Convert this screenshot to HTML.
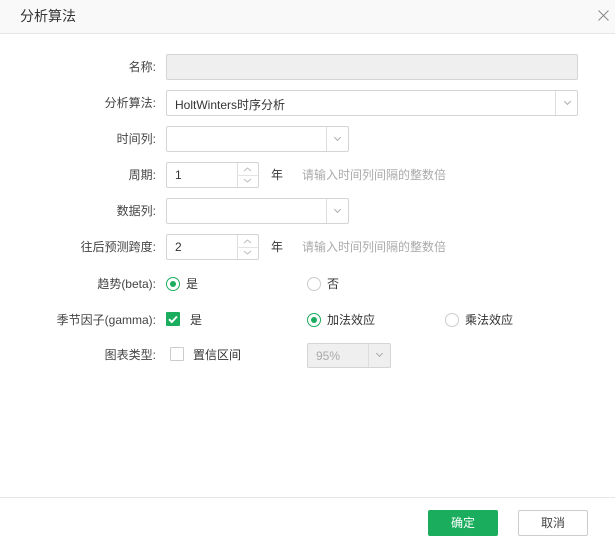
<!DOCTYPE html><html><head><meta charset="utf-8"><style>
*{box-sizing:border-box;margin:0;padding:0}
body{width:615px;height:546px;background:#fff;font-family:"Liberation Sans","Noto Sans CJK SC",sans-serif;font-size:12px;color:#333;position:relative;overflow:hidden}
.a{position:absolute}
.hd{left:0;top:0;width:615px;height:34px;background:#f9f9f9;border-bottom:1px solid #e6e6e6}
.lb{right:459px;text-align:right;white-space:nowrap;color:#444}
.in{border:1px solid #d4d4d4;background:#fff;border-radius:2px}
.dv{position:absolute;top:0;bottom:0;border-left:1px solid #ddd}
.ar{position:absolute;width:5px;height:5px;border-right:1px solid #aaa;border-bottom:1px solid #aaa;transform:rotate(45deg)}
.rd{width:14px;height:14px;border:1px solid #ccc;border-radius:50%;background:#fff}
.rd.on{border-color:#1aad5d}
.rd.on:after{content:"";position:absolute;left:3px;top:3px;width:6px;height:6px;border-radius:50%;background:#1aad5d}
.hint{color:#aaa}
</style></head><body>
<div class="a hd"></div>
<div class="a" style="left:20px;top:6px;font-size:14px;color:#333">分析算法</div>
<svg class="a" style="left:598px;top:10px" width="11" height="11"><path d="M0.5 0.5L10.5 10.5M10.5 0.5L0.5 10.5" stroke="#888" stroke-width="1"/></svg>

<div class="a lb" style="top:58px">名称:</div>
<div class="a in" style="left:166px;top:54px;width:412px;height:26px;background:#efefef"></div>

<div class="a lb" style="top:94px">分析算法:</div>
<div class="a in" style="left:166px;top:90px;width:412px;height:26px"><span style="position:absolute;left:8px;top:5px">HoltWinters时序分析</span><div class="dv" style="left:388px"></div><div class="ar" style="left:398px;top:8px"></div></div>

<div class="a lb" style="top:130px">时间列:</div>
<div class="a in" style="left:166px;top:126px;width:183px;height:26px"><div class="dv" style="left:159px"></div><div class="ar" style="left:168px;top:8px"></div></div>

<div class="a lb" style="top:166px">周期:</div>
<div class="a in" style="left:166px;top:162px;width:93px;height:26px"><span style="position:absolute;left:8px;top:5px">1</span><div class="dv" style="left:70px"></div><div style="position:absolute;left:70px;right:0;top:12px;border-top:1px solid #e4e4e4"></div><svg style="position:absolute;left:76px;top:3px" width="9" height="18"><path d="M1 5L4.5 2L8 5M1 13L4.5 16L8 13" stroke="#bbb" fill="none"/></svg></div>
<div class="a" style="left:271px;top:166px">年</div>
<div class="a hint" style="left:302px;top:166px">请输入时间列间隔的整数倍</div>

<div class="a lb" style="top:202px">数据列:</div>
<div class="a in" style="left:166px;top:198px;width:183px;height:26px"><div class="dv" style="left:159px"></div><div class="ar" style="left:168px;top:8px"></div></div>

<div class="a lb" style="top:238px">往后预测跨度:</div>
<div class="a in" style="left:166px;top:234px;width:93px;height:26px"><span style="position:absolute;left:8px;top:5px">2</span><div class="dv" style="left:70px"></div><div style="position:absolute;left:70px;right:0;top:12px;border-top:1px solid #e4e4e4"></div><svg style="position:absolute;left:76px;top:3px" width="9" height="18"><path d="M1 5L4.5 2L8 5M1 13L4.5 16L8 13" stroke="#bbb" fill="none"/></svg></div>
<div class="a" style="left:271px;top:238px">年</div>
<div class="a hint" style="left:302px;top:238px">请输入时间列间隔的整数倍</div>

<div class="a lb" style="top:275px">趋势(beta):</div>
<div class="a rd on" style="left:166px;top:277px"></div>
<div class="a" style="left:186px;top:275px">是</div>
<div class="a rd" style="left:307px;top:277px"></div>
<div class="a" style="left:327px;top:275px">否</div>

<div class="a lb" style="top:311px">季节因子(gamma):</div>
<div class="a" style="left:166px;top:312px;width:14px;height:14px;background:#1aad5d;border-radius:1px"><svg width="14" height="14"><path d="M3 7.2l2.8 2.8L11 4.5" stroke="#fff" stroke-width="2" fill="none"/></svg></div>
<div class="a" style="left:190px;top:311px">是</div>
<div class="a rd on" style="left:307px;top:313px"></div>
<div class="a" style="left:327px;top:311px">加法效应</div>
<div class="a rd" style="left:445px;top:313px"></div>
<div class="a" style="left:465px;top:311px">乘法效应</div>

<div class="a lb" style="top:346px">图表类型:</div>
<div class="a" style="left:170px;top:347px;width:14px;height:14px;border:1px solid #ccc;border-radius:1px"></div>
<div class="a" style="left:193px;top:346px">置信区间</div>
<div class="a in" style="left:307px;top:343px;width:84px;height:25px;background:#efefef"><span style="position:absolute;left:8px;top:5px;color:#aaa">95%</span><div class="dv" style="left:60px"></div><div class="ar" style="left:69px;top:7px"></div></div>

<div class="a" style="left:0;top:497px;width:615px;border-top:1px solid #e6e6e6"></div>
<div class="a" style="left:428px;top:510px;width:70px;height:26px;background:#1aad5d;border-radius:2px;color:#fff;text-align:center;line-height:26px">确定</div>
<div class="a" style="left:518px;top:510px;width:70px;height:26px;border:1px solid #ccc;border-radius:2px;text-align:center;line-height:24px;color:#444">取消</div>
</body></html>
